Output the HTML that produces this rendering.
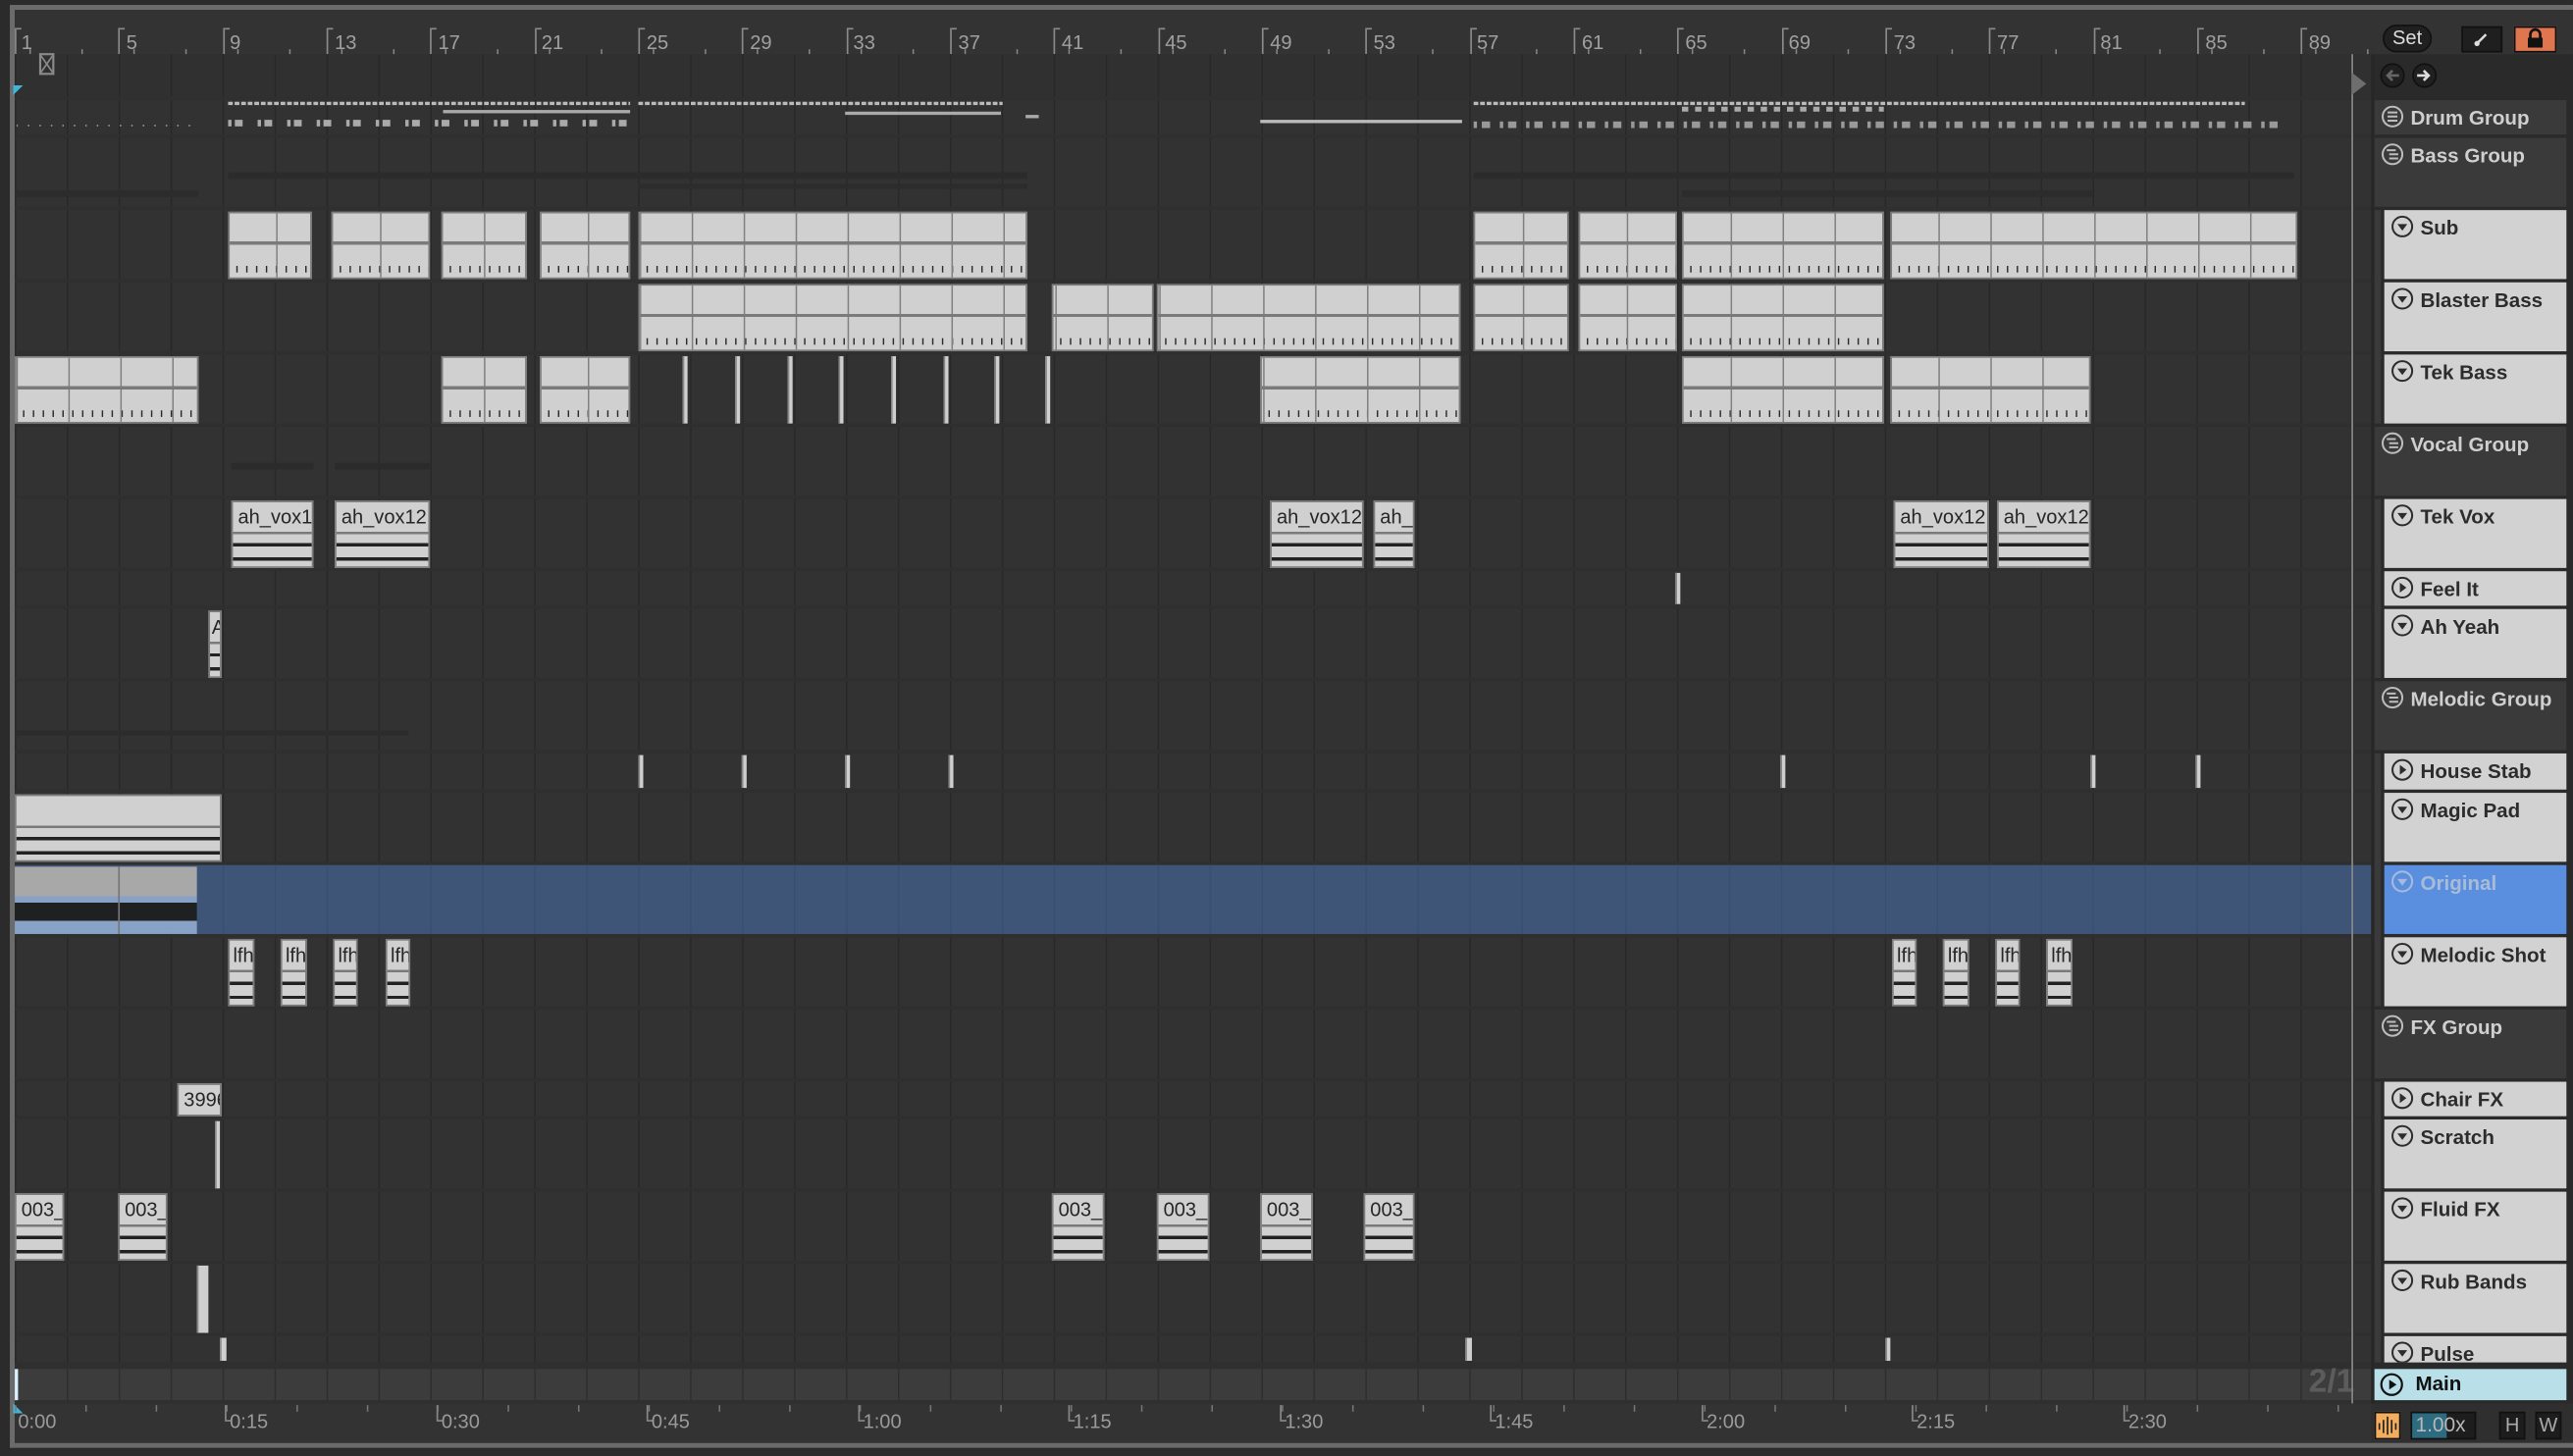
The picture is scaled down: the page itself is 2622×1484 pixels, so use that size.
<!DOCTYPE html>
<html><head><meta charset="utf-8">
<style>
html,body{margin:0;padding:0;background:#2b2b2b;overflow:hidden;width:2622px;height:1484px}
#w{position:absolute;left:0;top:0;width:1568px;height:887px;transform:scale(1.67219,1.67305);transform-origin:0 0;font-family:"Liberation Sans",sans-serif;background:#2b2b2b}
.a0{position:absolute}
.tr{position:absolute;left:9px;width:1436px;background-color:#323232;background-image:linear-gradient(90deg,#282828 0 1px,transparent 1px);background-size:31.66px 100%;background-position:0 0}
.c{position:absolute;box-sizing:border-box;border:1px solid #7c7c7c;background-color:#d0d0d0;overflow:hidden}
.m{background-image:linear-gradient(to bottom,transparent 44%,#7a7a7a 44%,#7a7a7a calc(44% + 2px),transparent calc(44% + 2px)),linear-gradient(90deg,#808080 0 1px,transparent 1px),linear-gradient(90deg,#2a2a2a 0 1px,transparent 1px);background-size:100% 100%,31.66px 100%,6px 4px;background-repeat:no-repeat,repeat,repeat-x;background-position:0 0,var(--o) 0,4px calc(100% - 3px)}
.au{background-image:linear-gradient(to bottom,transparent 46%,#7a7a7a 46%,#7a7a7a calc(46% + 1.5px),transparent calc(46% + 1.5px),transparent 64%,#222 64%,#222 calc(64% + 2px),transparent calc(64% + 2px),transparent 86%,#222 86%,#222 calc(86% + 2px),transparent calc(86% + 2px))}
.c span{position:absolute;left:3px;top:2px;font-size:12px;color:#262626;white-space:nowrap}
.sl{position:absolute;width:3px;background:#cfcfcf;border-left:1px solid #888;box-sizing:border-box}
.rk{position:absolute;top:17px;height:16px;border-left:1px solid #8a8a8a}
.rk i{position:absolute;left:0;top:0;width:3px;border-top:1px solid #8a8a8a}
.rl{position:absolute;top:19px;font-size:12px;color:#a0a0a0}
.hg{position:absolute;left:1447px;width:117px;background:#3a3a3a;color:#cfcfcf;font-weight:bold;font-size:12.3px}
.ht{position:absolute;left:1453px;width:111px;background:#d2d2d2;color:#2c2c2c;font-weight:bold;font-size:12.3px}
.hg svg,.ht svg{position:absolute;left:4px;top:3px}
.hg b,.ht b{position:absolute;left:22px;top:4px;white-space:nowrap}
.st{position:absolute;left:1447px;width:4px;background:#3a3a3a}
.bl{position:absolute;top:859px;font-size:12px;color:#9a9a9a}
.bk{position:absolute;top:856px;height:10px;border-left:1px solid #888}
.bk i{position:absolute;left:0;bottom:0;width:3px;border-top:1px solid #888}
</style></head><body><div id="w">
<div class="a0" style="left:6px;top:3px;width:1562px;height:2.5px;background:#6b6b6b;border-radius:4px 0 0 0"></div>
<div class="a0" style="left:6px;top:3px;width:2.5px;height:879px;background:#6b6b6b"></div>
<div class="a0" style="left:6px;top:879px;width:1562px;height:2.5px;background:#6b6b6b"></div>
<div class="a0" style="left:8.5px;top:5.5px;width:1560px;height:873px;background:#2f2f2f"></div>

<div class="a0" style="left:9px;top:6px;width:1436px;height:27px;background:#333"></div>
<div class="rk" style="left:9px"><i></i></div><div class="rl" style="left:13px">1</div>
<div class="rk" style="left:72px"><i></i></div><div class="rl" style="left:77px">5</div>
<div class="rk" style="left:136px"><i></i></div><div class="rl" style="left:140px">9</div>
<div class="rk" style="left:199px"><i></i></div><div class="rl" style="left:204px">13</div>
<div class="rk" style="left:262px"><i></i></div><div class="rl" style="left:267px">17</div>
<div class="rk" style="left:326px"><i></i></div><div class="rl" style="left:330px">21</div>
<div class="rk" style="left:389px"><i></i></div><div class="rl" style="left:394px">25</div>
<div class="rk" style="left:452px"><i></i></div><div class="rl" style="left:457px">29</div>
<div class="rk" style="left:516px"><i></i></div><div class="rl" style="left:520px">33</div>
<div class="rk" style="left:579px"><i></i></div><div class="rl" style="left:584px">37</div>
<div class="rk" style="left:642px"><i></i></div><div class="rl" style="left:647px">41</div>
<div class="rk" style="left:706px"><i></i></div><div class="rl" style="left:710px">45</div>
<div class="rk" style="left:769px"><i></i></div><div class="rl" style="left:774px">49</div>
<div class="rk" style="left:832px"><i></i></div><div class="rl" style="left:837px">53</div>
<div class="rk" style="left:896px"><i></i></div><div class="rl" style="left:900px">57</div>
<div class="rk" style="left:959px"><i></i></div><div class="rl" style="left:964px">61</div>
<div class="rk" style="left:1022px"><i></i></div><div class="rl" style="left:1027px">65</div>
<div class="rk" style="left:1086px"><i></i></div><div class="rl" style="left:1090px">69</div>
<div class="rk" style="left:1149px"><i></i></div><div class="rl" style="left:1154px">73</div>
<div class="rk" style="left:1212px"><i></i></div><div class="rl" style="left:1217px">77</div>
<div class="rk" style="left:1276px"><i></i></div><div class="rl" style="left:1280px">81</div>
<div class="rk" style="left:1339px"><i></i></div><div class="rl" style="left:1344px">85</div>
<div class="rk" style="left:1402px"><i></i></div><div class="rl" style="left:1407px">89</div>
<div class="a0" style="left:9px;top:30px;width:1436px;height:3px;background-image:linear-gradient(90deg,#888 0 1px,transparent 1px);background-size:31.66px 100%;background-position:40.6px 0;background-repeat:repeat-x"></div>

<div class="tr" style="top:33px;height:26px;background-color:#303030"></div>
<div class="tr" style="top:61px;height:21px"></div>
<div class="tr" style="top:84px;height:42px"></div>
<div class="tr" style="top:128px;height:42px"></div>
<div class="tr" style="top:172px;height:42px"></div>
<div class="tr" style="top:216px;height:42px"></div>
<div class="tr" style="top:260px;height:42px"></div>
<div class="tr" style="top:304px;height:42px"></div>
<div class="tr" style="top:348px;height:21px"></div>
<div class="tr" style="top:371px;height:42px"></div>
<div class="tr" style="top:415px;height:42px"></div>
<div class="tr" style="top:459px;height:22px"></div>
<div class="tr" style="top:483px;height:42px"></div>
<div class="tr" style="top:527px;height:42px;background-color:#3e5577;background-image:linear-gradient(90deg,#38506f 0 1px,transparent 1px)"></div>
<div class="tr" style="top:571px;height:42px"></div>
<div class="tr" style="top:615px;height:42px"></div>
<div class="tr" style="top:659px;height:21px"></div>
<div class="tr" style="top:682px;height:42px"></div>
<div class="tr" style="top:726px;height:42px"></div>
<div class="tr" style="top:770px;height:42px"></div>
<div class="tr" style="top:814px;height:16px"></div>
<div class="tr" style="top:834px;height:19px;background-color:#3c3c3c;background-image:linear-gradient(90deg,#2e2e2e 0 1px,transparent 1px)"></div>

<svg class="a0" style="left:23px;top:32px" width="11" height="14"><rect x="1.5" y="1" width="8" height="12" fill="none" stroke="#8a8a8a" stroke-width="1.3"/><path d="M2 2L9 12M9 2L2 12" stroke="#8a8a8a" stroke-width="1"/></svg>
<svg class="a0" style="left:8px;top:52px" width="6" height="6"><path d="M0 0H6L0 6Z" fill="#3fb6d8"/></svg>

<div class="a0" style="left:10px;top:76px;width:110px;height:1px;background-image:linear-gradient(90deg,#9a9a9a 0 1px,transparent 1px);background-size:7px 1px"></div>
<div class="a0" style="left:139px;top:62px;width:245px;height:2px;background-image:linear-gradient(90deg,#bbb 0 3px,transparent 3px);background-size:4px 2px"></div>
<div class="a0" style="left:389px;top:62px;width:222px;height:2px;background-image:linear-gradient(90deg,#bbb 0 3px,transparent 3px);background-size:4px 2px"></div>
<div class="a0" style="left:139px;top:73px;width:245px;height:4px;background-image:linear-gradient(90deg,#aaa 0 2px,transparent 2px 4px,#aaa 4px 9px,transparent 9px);background-size:18px 4px"></div>
<div class="a0" style="left:270px;top:67px;width:114px;height:1.5px;background:#aaa"></div>
<div class="a0" style="left:515px;top:68px;width:95px;height:1.5px;background:#aaa"></div>
<div class="a0" style="left:768px;top:73px;width:123px;height:1.5px;background:#bbb"></div>
<div class="a0" style="left:898px;top:62px;width:470px;height:2px;background-image:linear-gradient(90deg,#bbb 0 3px,transparent 3px);background-size:4px 2px"></div>
<div class="a0" style="left:1025px;top:65px;width:123px;height:3px;background-image:linear-gradient(90deg,#aaa 0 4px,transparent 4px);background-size:8px 3px"></div>
<div class="a0" style="left:898px;top:74px;width:490px;height:4px;background-image:linear-gradient(90deg,#999 0 2px,transparent 2px 5px,#999 5px 10px,transparent 10px);background-size:16px 4px"></div>
<div class="a0" style="left:625px;top:70px;width:8px;height:1.5px;background:#aaa"></div>
<div class="a0" style="left:139px;top:105px;width:487px;height:4px;background:#2b2b2b"></div>
<div class="a0" style="left:898px;top:105px;width:500px;height:4px;background:#2b2b2b"></div>
<div class="a0" style="left:389px;top:112px;width:237px;height:3px;background:#2c2c2c"></div>
<div class="a0" style="left:9px;top:116px;width:112px;height:4px;background:#2c2c2c"></div>
<div class="a0" style="left:1025px;top:116px;width:250px;height:4px;background:#2c2c2c"></div>

<div class="c m" style="--o:-130px;left:139px;top:129px;width:51px;height:41px"></div>
<div class="c m" style="--o:-193px;left:202px;top:129px;width:60px;height:41px"></div>
<div class="c m" style="--o:-260px;left:269px;top:129px;width:52px;height:41px"></div>
<div class="c m" style="--o:-320px;left:329px;top:129px;width:55px;height:41px"></div>
<div class="c m" style="--o:-380px;left:389px;top:129px;width:237px;height:41px"></div>
<div class="c m" style="--o:-889px;left:898px;top:129px;width:58px;height:41px"></div>
<div class="c m" style="--o:-953px;left:962px;top:129px;width:60px;height:41px"></div>
<div class="c m" style="--o:-1016px;left:1025px;top:129px;width:123px;height:41px"></div>
<div class="c m" style="--o:-1143px;left:1152px;top:129px;width:248px;height:41px"></div>
<div class="c m" style="--o:-380px;left:389px;top:173px;width:237px;height:41px"></div>
<div class="c m" style="--o:-632px;left:641px;top:173px;width:62px;height:41px"></div>
<div class="c m" style="--o:-696px;left:705px;top:173px;width:185px;height:41px"></div>
<div class="c m" style="--o:-889px;left:898px;top:173px;width:58px;height:41px"></div>
<div class="c m" style="--o:-953px;left:962px;top:173px;width:60px;height:41px"></div>
<div class="c m" style="--o:-1016px;left:1025px;top:173px;width:123px;height:41px"></div>
<div class="c m" style="--o:0px;left:9px;top:217px;width:112px;height:41px"></div>
<div class="c m" style="--o:-260px;left:269px;top:217px;width:52px;height:41px"></div>
<div class="c m" style="--o:-320px;left:329px;top:217px;width:55px;height:41px"></div>
<div class="c m" style="--o:-759px;left:768px;top:217px;width:122px;height:41px"></div>
<div class="c m" style="--o:-1016px;left:1025px;top:217px;width:123px;height:41px"></div>
<div class="c m" style="--o:-1143px;left:1152px;top:217px;width:122px;height:41px"></div>
<div class="sl" style="left:416px;top:217px;height:41px"></div>
<div class="sl" style="left:448px;top:217px;height:41px"></div>
<div class="sl" style="left:480px;top:217px;height:41px"></div>
<div class="sl" style="left:511px;top:217px;height:41px"></div>
<div class="sl" style="left:543px;top:217px;height:41px"></div>
<div class="sl" style="left:575px;top:217px;height:41px"></div>
<div class="sl" style="left:606px;top:217px;height:41px"></div>
<div class="sl" style="left:637px;top:217px;height:41px"></div>
<div class="a0" style="left:141px;top:282px;width:50px;height:4px;background:#2b2b2b"></div>
<div class="a0" style="left:204px;top:282px;width:58px;height:4px;background:#2b2b2b"></div>
<div class="c au" style="left:141px;top:305px;width:50px;height:41px"><span>ah_vox1</span></div>
<div class="c au" style="left:204px;top:305px;width:58px;height:41px"><span>ah_vox12</span></div>
<div class="c au" style="left:774px;top:305px;width:57px;height:41px"><span>ah_vox12</span></div>
<div class="c au" style="left:837px;top:305px;width:25px;height:41px"><span>ah_</span></div>
<div class="c au" style="left:1154px;top:305px;width:58px;height:41px"><span>ah_vox12</span></div>
<div class="c au" style="left:1217px;top:305px;width:57px;height:41px"><span>ah_vox12</span></div>
<div class="sl" style="left:1021px;top:349px;height:19px"></div>
<div class="c au" style="left:127px;top:372px;width:8px;height:41px"><span style="left:1px">A</span></div>
<div class="a0" style="left:9px;top:445px;width:240px;height:3px;background:#2c2c2c"></div>
<div class="sl" style="left:389px;top:460px;height:20px"></div>
<div class="sl" style="left:452px;top:460px;height:20px"></div>
<div class="sl" style="left:515px;top:460px;height:20px"></div>
<div class="sl" style="left:578px;top:460px;height:20px"></div>
<div class="sl" style="left:1085px;top:460px;height:20px"></div>
<div class="sl" style="left:1274px;top:460px;height:20px"></div>
<div class="sl" style="left:1338px;top:460px;height:20px"></div>
<div class="c au" style="left:9px;top:484px;width:126px;height:41px"></div>
<div class="a0" style="left:9px;top:528px;width:111px;height:18px;background:#a8a8a8"></div>
<div class="a0" style="left:9px;top:546px;width:111px;height:23px;background:linear-gradient(#87a2c6 0 4px,#1f2022 4px 15px,#87a2c6 15px)"></div>
<div class="a0" style="left:72px;top:528px;width:1px;height:41px;background:#777"></div>
<div class="c au" style="left:139px;top:572px;width:16px;height:41px"><span style="left:2px">lfh</span></div>
<div class="c au" style="left:171px;top:572px;width:16px;height:41px"><span style="left:2px">lfh</span></div>
<div class="c au" style="left:203px;top:572px;width:15px;height:41px"><span style="left:2px">lfh</span></div>
<div class="c au" style="left:235px;top:572px;width:15px;height:41px"><span style="left:2px">lfh</span></div>
<div class="c au" style="left:1153px;top:572px;width:15px;height:41px"><span style="left:2px">lfh</span></div>
<div class="c au" style="left:1184px;top:572px;width:16px;height:41px"><span style="left:2px">lfh</span></div>
<div class="c au" style="left:1216px;top:572px;width:15px;height:41px"><span style="left:2px">lfh</span></div>
<div class="c au" style="left:1247px;top:572px;width:16px;height:41px"><span style="left:2px">lfh</span></div>
<div class="c" style="left:108px;top:660px;width:27px;height:20px"><span style="top:2px">3996</span></div>
<div class="sl" style="left:131px;top:683px;height:41px"></div>
<div class="c au" style="left:9px;top:727px;width:30px;height:41px"><span>003_</span></div>
<div class="c au" style="left:72px;top:727px;width:30px;height:41px"><span>003_</span></div>
<div class="c au" style="left:641px;top:727px;width:32px;height:41px"><span>003_</span></div>
<div class="c au" style="left:705px;top:727px;width:32px;height:41px"><span>003_</span></div>
<div class="c au" style="left:768px;top:727px;width:32px;height:41px"><span>003_</span></div>
<div class="c au" style="left:831px;top:727px;width:31px;height:41px"><span>003_</span></div>
<div class="sl" style="left:120px;top:771px;height:41px;width:7px"></div>
<div class="sl" style="left:134px;top:815px;height:14px;width:4px"></div>
<div class="sl" style="left:893px;top:815px;height:14px;width:4px"></div>
<div class="sl" style="left:1149px;top:815px;height:14px;width:3px"></div>
<div class="a0" style="left:9px;top:834px;width:1.5px;height:19px;background:#d8f2ff"></div>
<div class="a0" style="left:1407px;top:831px;font-size:20px;font-weight:bold;color:#5c5c5c">2/1</div>

<div class="a0" style="left:1433px;top:33px;width:1px;height:822px;background:#8a8a8a"></div>
<svg class="a0" style="left:1433px;top:44px" width="10" height="14"><path d="M0 0L9 7L0 14Z" fill="#6e6e6e"/></svg>
<div class="a0" style="left:1445px;top:33px;width:2px;height:822px;background:#272727"></div>

<div class="a0" style="left:1447px;top:33px;width:121px;height:822px;background:#2a2a2a"></div>
<div class="a0" style="left:1445px;top:6px;width:123px;height:27px;background:#333"></div>

<div class="a0" style="left:1452px;top:15px;width:30px;height:17px;border-radius:9px;background:#202020;border:1px solid #111;box-sizing:border-box;color:#ddd;font-size:12px;text-align:center;line-height:15px">Set</div>
<div class="a0" style="left:1500px;top:16px;width:25px;height:16px;background:#1f1f1f;border:1px solid #111;box-sizing:border-box"></div>
<svg class="a0" style="left:1507px;top:19px" width="10" height="10"><path d="M2 8L8 2" stroke="#ddd" stroke-width="1.5"/><circle cx="2.5" cy="7.5" r="1.6" fill="#ddd"/></svg>
<div class="a0" style="left:1532px;top:16px;width:26px;height:16px;background:#e07650;border:1px solid #111;box-sizing:border-box"></div>
<svg class="a0" style="left:1539px;top:17px" width="12" height="13"><path d="M3 6V4a3 3 0 0 1 6 0v2" stroke="#111" stroke-width="1.6" fill="none"/><rect x="1.5" y="6" width="9" height="6" fill="#111"/></svg>
<svg class="a0" style="left:1450px;top:38px" width="36" height="16"><circle cx="8" cy="8" r="7" fill="#202020" stroke="#111"/><path d="M12 8H5M8 5L5 8L8 11" stroke="#666" stroke-width="1.6" fill="none"/><circle cx="27.5" cy="8" r="7" fill="#202020" stroke="#111"/><path d="M23 8H30M27 5L30 8L27 11" stroke="#ddd" stroke-width="1.6" fill="none"/></svg>

<div class="hg" style="top:61px;height:21px"><svg width="14" height="14"><circle cx="7" cy="7" r="6" fill="none" stroke="#bdbdbd" stroke-width="1.2"/><path d="M4 4.5H10M4 7H10M4 9.5H10" stroke="#bdbdbd" stroke-width="1.2"/></svg><b>Drum Group</b></div>
<div class="hg" style="top:84px;height:42px"><svg width="14" height="14"><circle cx="7" cy="7" r="6" fill="none" stroke="#bdbdbd" stroke-width="1.2"/><path d="M3.5 4.5H9M5 7H10.5M5 9.5H10.5" stroke="#bdbdbd" stroke-width="1.2"/></svg><b>Bass Group</b></div>
<div class="st" style="top:128px;height:130px"></div>
<div class="ht" style="top:128px;height:42px"><svg width="14" height="14"><circle cx="7" cy="7" r="6" fill="none" stroke="#2c2c2c" stroke-width="1.2"/><path d="M4 5.5H10L7 9.5Z" fill="#2c2c2c"/></svg><b>Sub</b></div>
<div class="ht" style="top:172px;height:42px"><svg width="14" height="14"><circle cx="7" cy="7" r="6" fill="none" stroke="#2c2c2c" stroke-width="1.2"/><path d="M4 5.5H10L7 9.5Z" fill="#2c2c2c"/></svg><b>Blaster Bass</b></div>
<div class="ht" style="top:216px;height:42px"><svg width="14" height="14"><circle cx="7" cy="7" r="6" fill="none" stroke="#2c2c2c" stroke-width="1.2"/><path d="M4 5.5H10L7 9.5Z" fill="#2c2c2c"/></svg><b>Tek Bass</b></div>
<div class="hg" style="top:260px;height:42px"><svg width="14" height="14"><circle cx="7" cy="7" r="6" fill="none" stroke="#bdbdbd" stroke-width="1.2"/><path d="M3.5 4.5H9M5 7H10.5M5 9.5H10.5" stroke="#bdbdbd" stroke-width="1.2"/></svg><b>Vocal Group</b></div>
<div class="st" style="top:304px;height:109px"></div>
<div class="ht" style="top:304px;height:42px"><svg width="14" height="14"><circle cx="7" cy="7" r="6" fill="none" stroke="#2c2c2c" stroke-width="1.2"/><path d="M4 5.5H10L7 9.5Z" fill="#2c2c2c"/></svg><b>Tek Vox</b></div>
<div class="ht" style="top:348px;height:21px"><svg width="14" height="14"><circle cx="7" cy="7" r="6" fill="none" stroke="#2c2c2c" stroke-width="1.2"/><path d="M5.5 4L9.5 7L5.5 10Z" fill="#2c2c2c"/></svg><b>Feel It</b></div>
<div class="ht" style="top:371px;height:42px"><svg width="14" height="14"><circle cx="7" cy="7" r="6" fill="none" stroke="#2c2c2c" stroke-width="1.2"/><path d="M4 5.5H10L7 9.5Z" fill="#2c2c2c"/></svg><b>Ah Yeah</b></div>
<div class="hg" style="top:415px;height:42px"><svg width="14" height="14"><circle cx="7" cy="7" r="6" fill="none" stroke="#bdbdbd" stroke-width="1.2"/><path d="M3.5 4.5H9M5 7H10.5M5 9.5H10.5" stroke="#bdbdbd" stroke-width="1.2"/></svg><b>Melodic Group</b></div>
<div class="st" style="top:459px;height:154px"></div>
<div class="ht" style="top:459px;height:22px"><svg width="14" height="14"><circle cx="7" cy="7" r="6" fill="none" stroke="#2c2c2c" stroke-width="1.2"/><path d="M5.5 4L9.5 7L5.5 10Z" fill="#2c2c2c"/></svg><b>House Stab</b></div>
<div class="ht" style="top:483px;height:42px"><svg width="14" height="14"><circle cx="7" cy="7" r="6" fill="none" stroke="#2c2c2c" stroke-width="1.2"/><path d="M4 5.5H10L7 9.5Z" fill="#2c2c2c"/></svg><b>Magic Pad</b></div>
<div class="ht" style="top:527px;height:42px;background:#5a8fdf;color:#a8bcd8"><svg width="14" height="14"><circle cx="7" cy="7" r="6" fill="none" stroke="#a8bcd8" stroke-width="1.2"/><path d="M4 5.5H10L7 9.5Z" fill="#a8bcd8"/></svg><b>Original</b></div>
<div class="ht" style="top:571px;height:42px"><svg width="14" height="14"><circle cx="7" cy="7" r="6" fill="none" stroke="#2c2c2c" stroke-width="1.2"/><path d="M4 5.5H10L7 9.5Z" fill="#2c2c2c"/></svg><b>Melodic Shot</b></div>
<div class="hg" style="top:615px;height:42px"><svg width="14" height="14"><circle cx="7" cy="7" r="6" fill="none" stroke="#bdbdbd" stroke-width="1.2"/><path d="M3.5 4.5H9M5 7H10.5M5 9.5H10.5" stroke="#bdbdbd" stroke-width="1.2"/></svg><b>FX Group</b></div>
<div class="st" style="top:659px;height:171px"></div>
<div class="ht" style="top:659px;height:21px"><svg width="14" height="14"><circle cx="7" cy="7" r="6" fill="none" stroke="#2c2c2c" stroke-width="1.2"/><path d="M5.5 4L9.5 7L5.5 10Z" fill="#2c2c2c"/></svg><b>Chair FX</b></div>
<div class="ht" style="top:682px;height:42px"><svg width="14" height="14"><circle cx="7" cy="7" r="6" fill="none" stroke="#2c2c2c" stroke-width="1.2"/><path d="M4 5.5H10L7 9.5Z" fill="#2c2c2c"/></svg><b>Scratch</b></div>
<div class="ht" style="top:726px;height:42px"><svg width="14" height="14"><circle cx="7" cy="7" r="6" fill="none" stroke="#2c2c2c" stroke-width="1.2"/><path d="M4 5.5H10L7 9.5Z" fill="#2c2c2c"/></svg><b>Fluid FX</b></div>
<div class="ht" style="top:770px;height:42px"><svg width="14" height="14"><circle cx="7" cy="7" r="6" fill="none" stroke="#2c2c2c" stroke-width="1.2"/><path d="M4 5.5H10L7 9.5Z" fill="#2c2c2c"/></svg><b>Rub Bands</b></div>
<div class="ht" style="top:814px;height:16px;overflow:hidden"><svg width="14" height="14"><circle cx="7" cy="7" r="6" fill="none" stroke="#2c2c2c" stroke-width="1.2"/><path d="M4 5.5H10L7 9.5Z" fill="#2c2c2c"/></svg><b>Pulse</b></div>
<div class="a0" style="left:1447px;top:834px;width:117px;height:19px;background:#b9dfe9;color:#111;font-weight:bold;font-size:12.3px"><svg style="position:absolute;left:3px;top:2px" width="15" height="15"><circle cx="7.5" cy="7.5" r="6.3" fill="none" stroke="#111" stroke-width="1.3"/><path d="M6 4.5L10.5 7.5L6 10.5Z" fill="#111"/></svg><b style="position:absolute;left:25px;top:2px">Main</b></div>

<div class="a0" style="left:9px;top:855px;width:1436px;height:24px;background:#333"></div>
<svg class="a0" style="left:8px;top:855px" width="6" height="6"><path d="M0 0L6 6H0Z" fill="#3fb6d8"/></svg>
<div class="bl" style="left:11px">0:00</div>
<div class="bk" style="left:137px"><i></i></div><div class="bl" style="left:140px">0:15</div>
<div class="bk" style="left:266px"><i></i></div><div class="bl" style="left:269px">0:30</div>
<div class="bk" style="left:394px"><i></i></div><div class="bl" style="left:397px">0:45</div>
<div class="bk" style="left:523px"><i></i></div><div class="bl" style="left:526px">1:00</div>
<div class="bk" style="left:651px"><i></i></div><div class="bl" style="left:654px">1:15</div>
<div class="bk" style="left:780px"><i></i></div><div class="bl" style="left:783px">1:30</div>
<div class="bk" style="left:908px"><i></i></div><div class="bl" style="left:911px">1:45</div>
<div class="bk" style="left:1037px"><i></i></div><div class="bl" style="left:1040px">2:00</div>
<div class="bk" style="left:1165px"><i></i></div><div class="bl" style="left:1168px">2:15</div>
<div class="bk" style="left:1294px"><i></i></div><div class="bl" style="left:1297px">2:30</div>
<div class="a0" style="left:9px;top:856px;width:1420px;height:4px;background-image:linear-gradient(90deg,#777 0 1px,transparent 1px);background-size:42.9px 100%;background-position:43px 0"></div>

<div class="a0" style="left:1447px;top:860px;width:16px;height:17px;background:#f2ad5e;border:1px solid #111;box-sizing:border-box"></div>
<svg class="a0" style="left:1449px;top:862px" width="12" height="13"><path d="M1 5V9M3.5 3V11M6 1V12M8.5 3V11M11 5V9" stroke="#222" stroke-width="1"/></svg>
<div class="a0" style="left:1469px;top:860px;width:40px;height:17px;background:#1d1d1d;border:1px solid #111;box-sizing:border-box"></div>
<div class="a0" style="left:1470px;top:861px;width:21px;height:15px;background:#2d6b80"></div>
<div class="a0" style="left:1472px;top:861px;font-size:12.5px;color:#b8b8b8">1.00x</div>
<div class="a0" style="left:1523px;top:860px;width:16px;height:17px;background:#1d1d1d;border:1px solid #111;box-sizing:border-box;color:#aaa;font-size:12px;text-align:center;line-height:15px">H</div>
<div class="a0" style="left:1545px;top:860px;width:16px;height:17px;background:#1d1d1d;border:1px solid #111;box-sizing:border-box;color:#aaa;font-size:12px;text-align:center;line-height:15px">W</div>
</div></body></html>
